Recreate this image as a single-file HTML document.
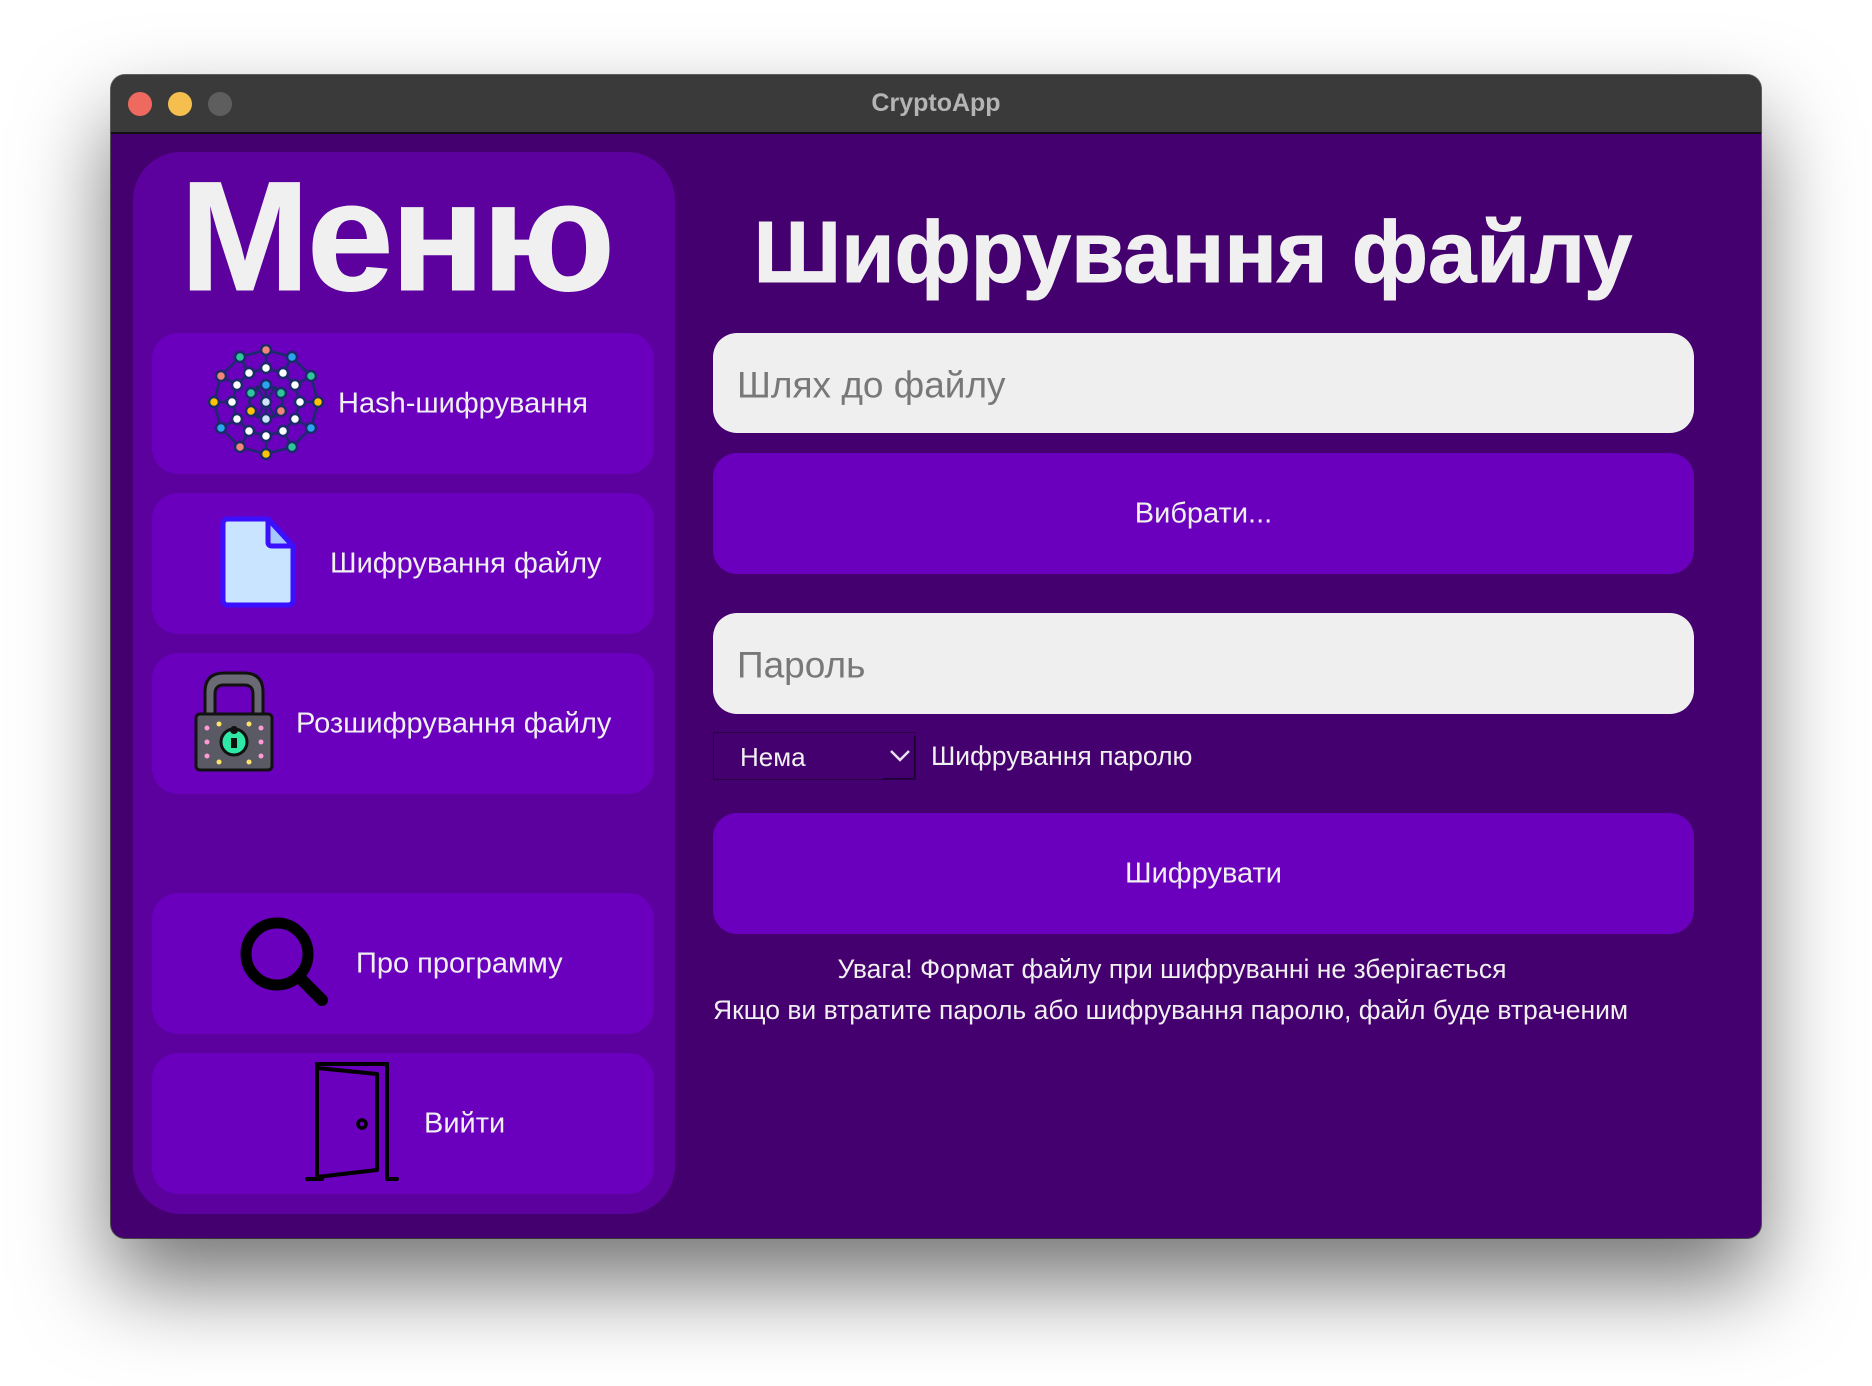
<!DOCTYPE html>
<html><head><meta charset="utf-8">
<style>
html,body{margin:0;padding:0;width:1872px;height:1386px;background:#fff;overflow:hidden;font-family:"Liberation Sans","DejaVu Sans",sans-serif;}
.win{position:absolute;left:111px;top:75px;width:1650px;height:1163px;border-radius:14px;background:#44006e;box-shadow:0 45px 90px rgba(0,0,0,0.55),0 0 0 1px rgba(0,0,0,0.6);overflow:hidden;}
.tb{position:absolute;left:0;top:0;width:100%;height:57px;background:#3a3a3a;border-bottom:2px solid #111;}
.dot{position:absolute;top:17px;width:24px;height:24px;border-radius:50%;}
.title{position:absolute;left:0;right:0;top:14px;text-align:center;color:#b4b4b4;font-weight:bold;font-size:25px;}
.abs{position:absolute;}
.side{position:absolute;left:22px;top:77px;width:542px;height:1062px;background:#5c009e;border-radius:48px;}
.mb{position:absolute;left:41px;width:502px;height:141px;background:#6a00be;border-radius:26px;}
.t{position:absolute;color:#f0f0f0;font-size:29px;white-space:nowrap;line-height:1;transform:translateY(-50%);}
.inp{position:absolute;left:602px;width:981px;background:#efefef;border-radius:24px;}
.btn{position:absolute;left:602px;width:981px;background:#6a00be;border-radius:24px;color:#f0f0f0;font-size:30px;text-align:center;}
</style></head><body>
<div class="win">
  <div class="tb">
    <div class="dot" style="left:17px;background:#ee6a5e"></div>
    <div class="dot" style="left:57px;background:#f5bf4f"></div>
    <div class="dot" style="left:97px;background:#5e5e5e"></div>
    <div class="title">CryptoApp</div>
  </div>
  <div class="side"></div>
  <div class="abs" style="left:14px;width:542px;top:84px;text-align:center;color:#f0f0f0;font-weight:900;font-size:156px;line-height:1;letter-spacing:-3px;-webkit-text-stroke:1px #f0f0f0;">Меню</div>

  <div class="mb" style="top:258px"></div>
  <div class="mb" style="top:418px"></div>
  <div class="mb" style="top:578px"></div>
  <div class="mb" style="top:818px"></div>
  <div class="mb" style="top:978px"></div>

  <svg class="abs" style="left:95px;top:267px" width="120" height="120" viewBox="0 0 120 120">
    <g stroke="#1c2a6b" stroke-width="2.5" fill="none">
      <polygon points="112,60 105,86 86,105 60,112 34,105 15,86 8,60 15,34 34,15 60,8 86,15 105,34"/>
      <polygon points="94,60 89,77 77,89 60,94 43,89 31,77 26,60 31,43 43,31 60,26 77,31 89,43"/>
      <polygon points="77,60 69,75 51,75 43,60 51,45 69,45"/>
      <path d="M112,60L94,60M105,86L89,77M86,105L77,89M60,112L60,94M34,105L43,89M15,86L31,77M8,60L26,60M15,34L31,43M34,15L43,31M60,8L60,26M86,15L77,31M105,34L89,43M60,43L60,77M51,45L69,75M69,45L51,75"/>
    </g>
    <g stroke="#1c2a6b" stroke-width="2.5">
      <circle cx="60" cy="8" r="5" fill="#f0857a"/><circle cx="86" cy="15" r="5" fill="#2aa5ee"/><circle cx="105" cy="34" r="5" fill="#2ec59a"/><circle cx="112" cy="60" r="5" fill="#ffc400"/><circle cx="105" cy="86" r="5" fill="#2aa5ee"/><circle cx="86" cy="105" r="5" fill="#2ec59a"/><circle cx="60" cy="112" r="5" fill="#ffc400"/><circle cx="34" cy="105" r="5" fill="#f0857a"/><circle cx="15" cy="86" r="5" fill="#2aa5ee"/><circle cx="8" cy="60" r="5" fill="#ffc400"/><circle cx="15" cy="34" r="5" fill="#f0857a"/><circle cx="34" cy="15" r="5" fill="#2ec59a"/>
      <g fill="#fff"><circle cx="94" cy="60" r="5"/><circle cx="89" cy="77" r="5"/><circle cx="77" cy="89" r="5"/><circle cx="60" cy="94" r="5"/><circle cx="43" cy="89" r="5"/><circle cx="31" cy="77" r="5"/><circle cx="26" cy="60" r="5"/><circle cx="31" cy="43" r="5"/><circle cx="43" cy="31" r="5"/><circle cx="60" cy="26" r="5"/><circle cx="77" cy="31" r="5"/><circle cx="89" cy="43" r="5"/></g>
      <circle cx="60" cy="43" r="5" fill="#2aa5ee"/><circle cx="45" cy="51" r="5" fill="#2ec59a"/><circle cx="75" cy="51" r="5" fill="#2ec59a"/><circle cx="45" cy="69" r="5" fill="#ffc400"/><circle cx="75" cy="69" r="5" fill="#f0857a"/><circle cx="60" cy="77" r="5" fill="#cfe3ff"/><circle cx="60" cy="60" r="5" fill="#cfe3ff"/>
    </g>
  </svg>
  <div class="t" style="left:227px;top:329px">Hash-шифрування</div>

  <svg class="abs" style="left:109px;top:441px" width="80" height="94" viewBox="0 0 80 94">
    <path d="M8,3 H48 L73,30 V84 Q73,89 68,89 H8 Q3,89 3,84 V8 Q3,3 8,3 Z" fill="#c8e4ff" stroke="#3a10ff" stroke-width="5" stroke-linejoin="round"/>
    <path d="M48,3 V26 Q48,30 52,30 H73 Z" fill="#a7c8ff" stroke="#3a10ff" stroke-width="5" stroke-linejoin="round"/>
  </svg>
  <div class="t" style="left:219px;top:489px">Шифрування файлу</div>

  <svg class="abs" style="left:82px;top:595px" width="82" height="104" viewBox="0 0 82 104">
    <path d="M12,44 V22 Q12,3 31,3 H51 Q70,3 70,22 V44 H60 V24 Q60,15 51,15 H31 Q22,15 22,24 V44 Z" fill="#6a6a74" stroke="#111" stroke-width="3"/>
    <rect x="3" y="44" width="76" height="56" rx="4" fill="#5a5a64" stroke="#111" stroke-width="3"/>
    <g fill="#ff9ad6"><circle cx="14" cy="58" r="2.5"/><circle cx="14" cy="86" r="2.5"/><circle cx="68" cy="58" r="2.5"/><circle cx="68" cy="86" r="2.5"/><circle cx="14" cy="72" r="2.5"/><circle cx="68" cy="72" r="2.5"/></g>
    <g fill="#ffe46a"><circle cx="26" cy="54" r="2.5"/><circle cx="56" cy="54" r="2.5"/><circle cx="26" cy="92" r="2.5"/><circle cx="56" cy="92" r="2.5"/></g>
    <circle cx="41" cy="72" r="13" fill="#2ee8a8" stroke="#111" stroke-width="3"/>
    <path d="M41,64 a4,4 0 1,1 0.1,0 M38,68 h6 v10 h-6z" fill="#111"/>
  </svg>
  <div class="t" style="left:185px;top:649px">Розшифрування файлу</div>

  <svg class="abs" style="left:121px;top:835px" width="100" height="100" viewBox="0 0 100 100">
    <circle cx="45" cy="44" r="31" fill="none" stroke="#000" stroke-width="11"/>
    <line x1="68" y1="68" x2="90" y2="90" stroke="#000" stroke-width="12" stroke-linecap="round"/>
  </svg>
  <div class="t" style="left:245px;top:889px">Про программу</div>

  <svg class="abs" style="left:191px;top:982px" width="100" height="126" viewBox="0 0 100 126">
    <path d="M15,120 V7 H85 V122" fill="none" stroke="#000" stroke-width="4"/>
    <path d="M15,11 L75,17 V113 L15,120" fill="none" stroke="#000" stroke-width="4" stroke-linejoin="round"/>
    <line x1="5" y1="122" x2="20" y2="122" stroke="#000" stroke-width="4" stroke-linecap="round"/>
    <line x1="85" y1="122" x2="95" y2="122" stroke="#000" stroke-width="4" stroke-linecap="round"/>
    <circle cx="60" cy="67" r="4" fill="none" stroke="#000" stroke-width="3.5"/>
  </svg>
  <div class="t" style="left:313px;top:1049px">Вийти</div>

  <div class="abs" style="left:582px;width:1000px;top:134px;text-align:center;color:#f0f0f0;font-weight:bold;font-size:87px;line-height:1;-webkit-text-stroke:1px #f0f0f0;">Шифрування файлу</div>

  <div class="inp" style="top:258px;height:100px"></div>
  <div class="t" style="left:626px;top:310px;color:#787878;font-size:37px">Шлях до файлу</div>
  <div class="btn" style="top:378px;height:121px"></div>
  <div class="t" style="left:602px;width:981px;text-align:center;top:439px">Вибрати...</div>

  <div class="inp" style="top:538px;height:101px"></div>
  <div class="t" style="left:626px;top:590px;color:#787878;font-size:37px">Пароль</div>

  <div class="abs" style="left:602px;top:657px;width:203px;height:48px;border:1px solid #2a0048;box-sizing:border-box;"></div>
  <div class="abs" style="left:772px;top:661px;width:32px;height:43px;border-right:1px solid #1a0030;border-bottom:1px solid #1a0030;box-sizing:border-box;"></div>
  <svg class="abs" style="left:778px;top:674px" width="22" height="14" viewBox="0 0 22 14"><path d="M2,2 L11,11 L20,2" fill="none" stroke="#e8e0f0" stroke-width="2.5"/></svg>
  <div class="t" style="left:629px;top:682px;font-size:26px">Нема</div>
  <div class="t" style="left:820px;top:681px;font-size:26.5px">Шифрування паролю</div>

  <div class="btn" style="top:738px;height:121px"></div>
  <div class="t" style="left:602px;width:981px;text-align:center;top:799px">Шифрувати</div>

  <div class="t" style="left:602px;width:918px;text-align:center;top:894px;font-size:26.5px">Увага! Формат файлу при шифруванні не зберігається</div>
  <div class="t" style="left:602px;top:935px;font-size:26.5px">Якщо ви втратите пароль або шифрування паролю, файл буде втраченим</div>
</div>
</body></html>
